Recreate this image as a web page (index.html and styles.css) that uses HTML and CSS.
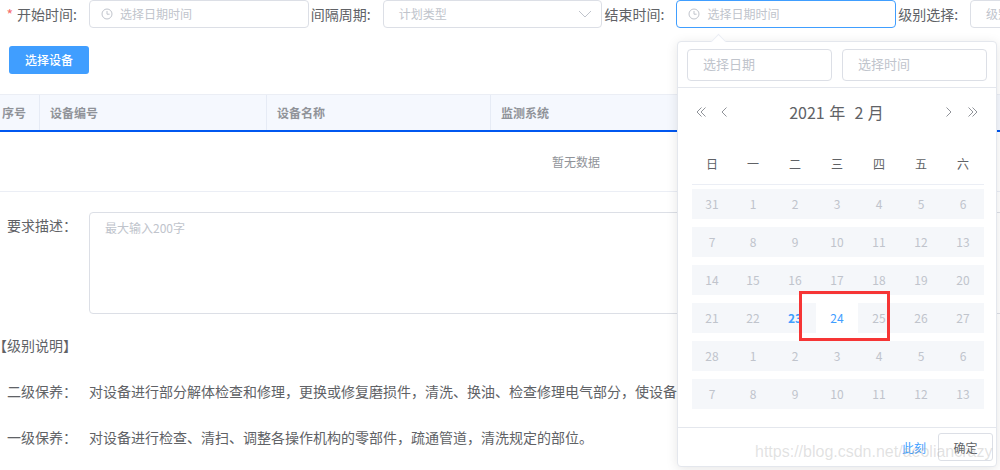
FILE: index.html
```html
<!DOCTYPE html>
<html lang="zh">
<head>
<meta charset="utf-8">
<title>保养计划</title>
<link rel="stylesheet" href="styles.css">
</head>
<body>
<svg class="defs" width="0" height="0" aria-hidden="true">
  <symbol id="clock" viewBox="0 0 12 12"><circle cx="6" cy="6" r="5" fill="none" stroke="currentColor"/><path d="M6 3v3.2h2.6" fill="none" stroke="currentColor"/></symbol>
  <symbol id="prev" viewBox="0 0 8 12"><path d="M6.500 1.500 2 6l4.500 4.500" fill="none" stroke="currentColor"/></symbol>
  <symbol id="next" viewBox="0 0 8 12"><path d="M1.500 1.500 6 6l-4.500 4.500" fill="none" stroke="currentColor"/></symbol>
  <symbol id="dprev" viewBox="0 0 10 12"><path d="M5.500 1.500 1 6l4.500 4.500M9.500 1.500 5 6l4.500 4.500" fill="none" stroke="currentColor"/></symbol>
  <symbol id="dnext" viewBox="0 0 10 12"><path d="M.5 1.500 5 6l-4.500 4.500M4.500 1.500 9 6l-4.500 4.500" fill="none" stroke="currentColor"/></symbol>
</svg>

<main class="page">
  <section class="filters">
    <label class="label label-first"><span class="star">*</span> 开始时间:</label>
    <div class="input"><svg class="clock"><use href="#clock"/></svg><span class="ph">选择日期时间</span></div>
    <label class="label">间隔周期:</label>
    <div class="input select"><span class="ph">计划类型</span><svg class="chevron" viewBox="0 0 14 8"><path d="M1 1l6 6 6-6" fill="none" stroke="currentColor"/></svg></div>
    <label class="label">结束时间:</label>
    <div class="input focus"><svg class="clock"><use href="#clock"/></svg><span class="ph">选择日期时间</span></div>
    <label class="label">级别选择:</label>
    <div class="input select"><span class="ph">级别</span></div>
  </section>

  <button class="primary" type="button">选择设备</button>

  <section class="table">
    <div class="thead">
      <div class="th th-no">序号</div>
      <div class="th th-code">设备编号</div>
      <div class="th th-name">设备名称</div>
      <div class="th th-sys">监测系统</div>
    </div>
    <div class="empty">暂无数据</div>
  </section>

  <section class="desc-field">
    <div class="side-label">要求描述：</div>
    <div class="textarea">最大输入200字</div>
  </section>

  <section class="notes">
    <div class="note note-title">【级别说明】</div>
    <div class="note"><span class="side-label">二级保养：</span><span>对设备进行部分解体检查和修理，更换或修复磨损件，清洗、换油、检查修理电气部分，使设备</span></div>
    <div class="note"><span class="side-label">一级保养：</span><span>对设备进行检查、清扫、调整各操作机构的零部件，疏通管道，清洗规定的部位。</span></div>
  </section>
</main>

<aside class="picker">
  <div class="picker-inputs">
    <div class="mini-input">选择日期</div>
    <div class="mini-input">选择时间</div>
  </div>
  <div class="cal-head">
    <svg class="nav nav-dprev"><use href="#dprev"/></svg>
    <svg class="nav nav-prev"><use href="#prev"/></svg>
    <div class="cal-title">2021 年&nbsp;&nbsp;2 月</div>
    <svg class="nav nav-next"><use href="#next"/></svg>
    <svg class="nav nav-dnext"><use href="#dnext"/></svg>
  </div>
  <div class="weekdays">
    <span>日</span><span>一</span><span>二</span><span>三</span><span>四</span><span>五</span><span>六</span>
  </div>
  <div class="weeks">
    <div class="week"><span>31</span><span>1</span><span>2</span><span>3</span><span>4</span><span>5</span><span>6</span></div>
    <div class="week"><span>7</span><span>8</span><span>9</span><span>10</span><span>11</span><span>12</span><span>13</span></div>
    <div class="week"><span>14</span><span>15</span><span>16</span><span>17</span><span>18</span><span>19</span><span>20</span></div>
    <div class="week"><span>21</span><span>22</span><span class="today">23</span><span class="current">24</span><span>25</span><span>26</span><span>27</span></div>
    <div class="week"><span>28</span><span>1</span><span>2</span><span>3</span><span>4</span><span>5</span><span>6</span></div>
    <div class="week"><span>7</span><span>8</span><span>9</span><span>10</span><span>11</span><span>12</span><span>13</span></div>
  </div>
  <div class="picker-foot">
    <span class="now">此刻</span>
    <button class="ok" type="button">确定</button>
  </div>
</aside>

<div class="redbox"></div>
<div class="watermark">https://blog.csdn.net/aeoliancrazy</div>
</body>
</html>
```

FILE: styles.css
```css
* { box-sizing: border-box; }
html, body { margin: 0; height: 470px; overflow: hidden; background: #fff; }
body {
  position: relative;
  width: 1000px;
  font-family: "Noto Sans CJK SC", "Noto Sans", sans-serif;
  font-size: 14px;
  color: #606266;
}
.defs { position: absolute; }
.page { width: 1000px; }

.filters { display: flex; align-items: center; height: 28px; width: 1300px; }
.label { width: 74.2px; padding-right: 12px; text-align: right; white-space: nowrap; flex: none; line-height: 27px; }
.label-first { width: 89px; }
.star { color: #f56c6c; margin-right: 1px; }
.input {
  flex: none;
  display: flex;
  align-items: center;
  width: 219.500px;
  height: 28px;
  padding-left: 11px;
  padding-bottom: 1px;
  border: 1px solid #dcdfe6;
  border-radius: 4px;
  background: #fff;
  font-size: 12px;
  color: #c0c4cc;
}
.input.select { padding-left: 15px; justify-content: space-between; padding-right: 9px; }
.input.focus { border-color: #409eff; }
.clock { width: 12px; height: 12px; margin-right: 7px; color: #c0c4cc; }
.chevron { width: 14px; height: 8px; color: #c0c4cc; }
.ph { white-space: nowrap; }

.primary {
  display: block;
  width: 80px;
  height: 28px;
  margin: 18px 0 0 9px;
  padding: 0 0 2px;
  border: 0;
  border-radius: 3px;
  background: #409eff;
  color: #fff;
  font: 500 12px "Noto Sans CJK SC", sans-serif;
}

.table { width: 1152px; margin-top: 20px; border-bottom: 1px solid #ebeef5; }
.thead {
  display: flex;
  height: 38px;
  border-top: 1px solid #ebeef5;
  border-bottom: 2px solid #0057f0;
  background: #f5f8fe;
  font-size: 12px;
  font-weight: 700;
  color: #909399;
}
.th { display: flex; align-items: center; border-right: 1px solid #e6ebf5; }
.th-no { width: 40px; padding-left: 2px; }
.th-code { width: 227px; padding-left: 10px; }
.th-name { width: 224px; padding-left: 10px; }
.th-sys { flex: 1; padding-left: 10px; border-right: 0; }
.empty { height: 59px; padding-bottom: 1px; display: flex; align-items: center; justify-content: center; font-size: 12px; color: #909399; }

.desc-field { display: flex; margin-top: 20px; }
.side-label { flex: none; width: 89px; padding-left: 7px; white-space: nowrap; }
.desc-field .side-label { line-height: 26px; }
.textarea {
  flex: none;
  width: 1060px;
  height: 102px;
  padding: 5px 15px;
  border: 1px solid #dcdfe6;
  border-radius: 4px;
  font-size: 12px;
  line-height: 20px;
  color: #c0c4cc;
}

.notes { margin-top: 8px; }
.note { display: flex; height: 46px; align-items: center; white-space: nowrap; }
.note-title { margin-left: -7px; }

.picker {
  position: absolute;
  left: 677px;
  top: 41px;
  width: 320px;
  height: 426px;
  background: #fff;
  border: 1px solid #e4e7ed;
  border-radius: 4px;
  box-shadow: 0 2px 12px rgba(0, 0, 0, 0.1);
}
.picker::before {
  content: "";
  position: absolute;
  left: 35px;
  top: -6px;
  width: 10px;
  height: 10px;
  background: #fff;
  border-top: 1px solid #ebeef5;
  border-left: 1px solid #ebeef5;
  transform: rotate(45deg);
}
.picker-inputs {
  position: relative;
  display: flex;
  gap: 10px;
  height: 46px;
  padding: 7px 9px 0;
  border-bottom: 1px solid #e4e7ed;
}
.mini-input {
  flex: none;
  width: 145px;
  height: 32px;
  padding-left: 15px;
  border: 1px solid #dcdfe6;
  border-radius: 4px;
  font-size: 13px;
  line-height: 28px;
  color: #c0c4cc;
}
.cal-head {
  display: flex;
  align-items: center;
  height: 50px;
  padding: 0 18px 2px;
  color: #606266;
}
.cal-title { flex: 1; text-align: center; font-size: 16px; word-spacing: 1px; color: #606266; }
.nav { color: #909399; flex: none; }
.nav-dprev { width: 10px; height: 12px; }
.nav-prev { width: 8px; height: 12px; margin-left: 14px; }
.nav-next { width: 8px; height: 12px; margin-right: 15px; }
.nav-dnext { width: 10px; height: 12px; }

.weekdays, .week {
  display: grid;
  grid-template-columns: 40px repeat(6, 42px);
  width: 292px;
  font-size: 12px;
  text-align: center;
}
.weekdays {
  height: 47px;
  margin-left: 14px;
  padding-top: 14px;
  line-height: 24px;
  border-bottom: 1px solid #ebeef5;
  color: #606266;
}
.weeks {
  display: flex;
  flex-direction: column;
  gap: 8px;
  margin: 4px 0 0 14px;
}
.week {
  height: 30px;
  background: #f5f7fa;
  line-height: 29px;
  color: #c0c4cc;
}
.week span { display: block; }
.today { color: #409eff; font-weight: 700; }
.current { background: #fff; color: #409eff; }
.picker-foot {
  position: absolute;
  left: 0;
  right: 0;
  bottom: 0;
  height: 39px;
  display: flex;
  align-items: center;
  justify-content: flex-end;
  gap: 12px;
  padding: 0 3px 0 0;
  border-top: 1px solid #e4e7ed;
}
.now { font-size: 12px; color: #409eff; }
.ok {
  width: 55px;
  height: 28px;
  padding: 0;
  border: 1px solid #dcdfe6;
  border-radius: 3px;
  background: #fff;
  color: #606266;
  font: 12px "Noto Sans CJK SC", sans-serif;
}

.redbox {
  position: absolute;
  left: 799px;
  top: 291px;
  width: 91px;
  height: 50px;
  border: 3px solid #f63535;
}
.watermark {
  position: absolute;
  left: 755px;
  top: 442px;
  font-family: "Liberation Sans", sans-serif;
  font-size: 16px;
  line-height: 20px;
  color: rgba(170, 170, 170, 0.35);
  white-space: nowrap;
}
```
